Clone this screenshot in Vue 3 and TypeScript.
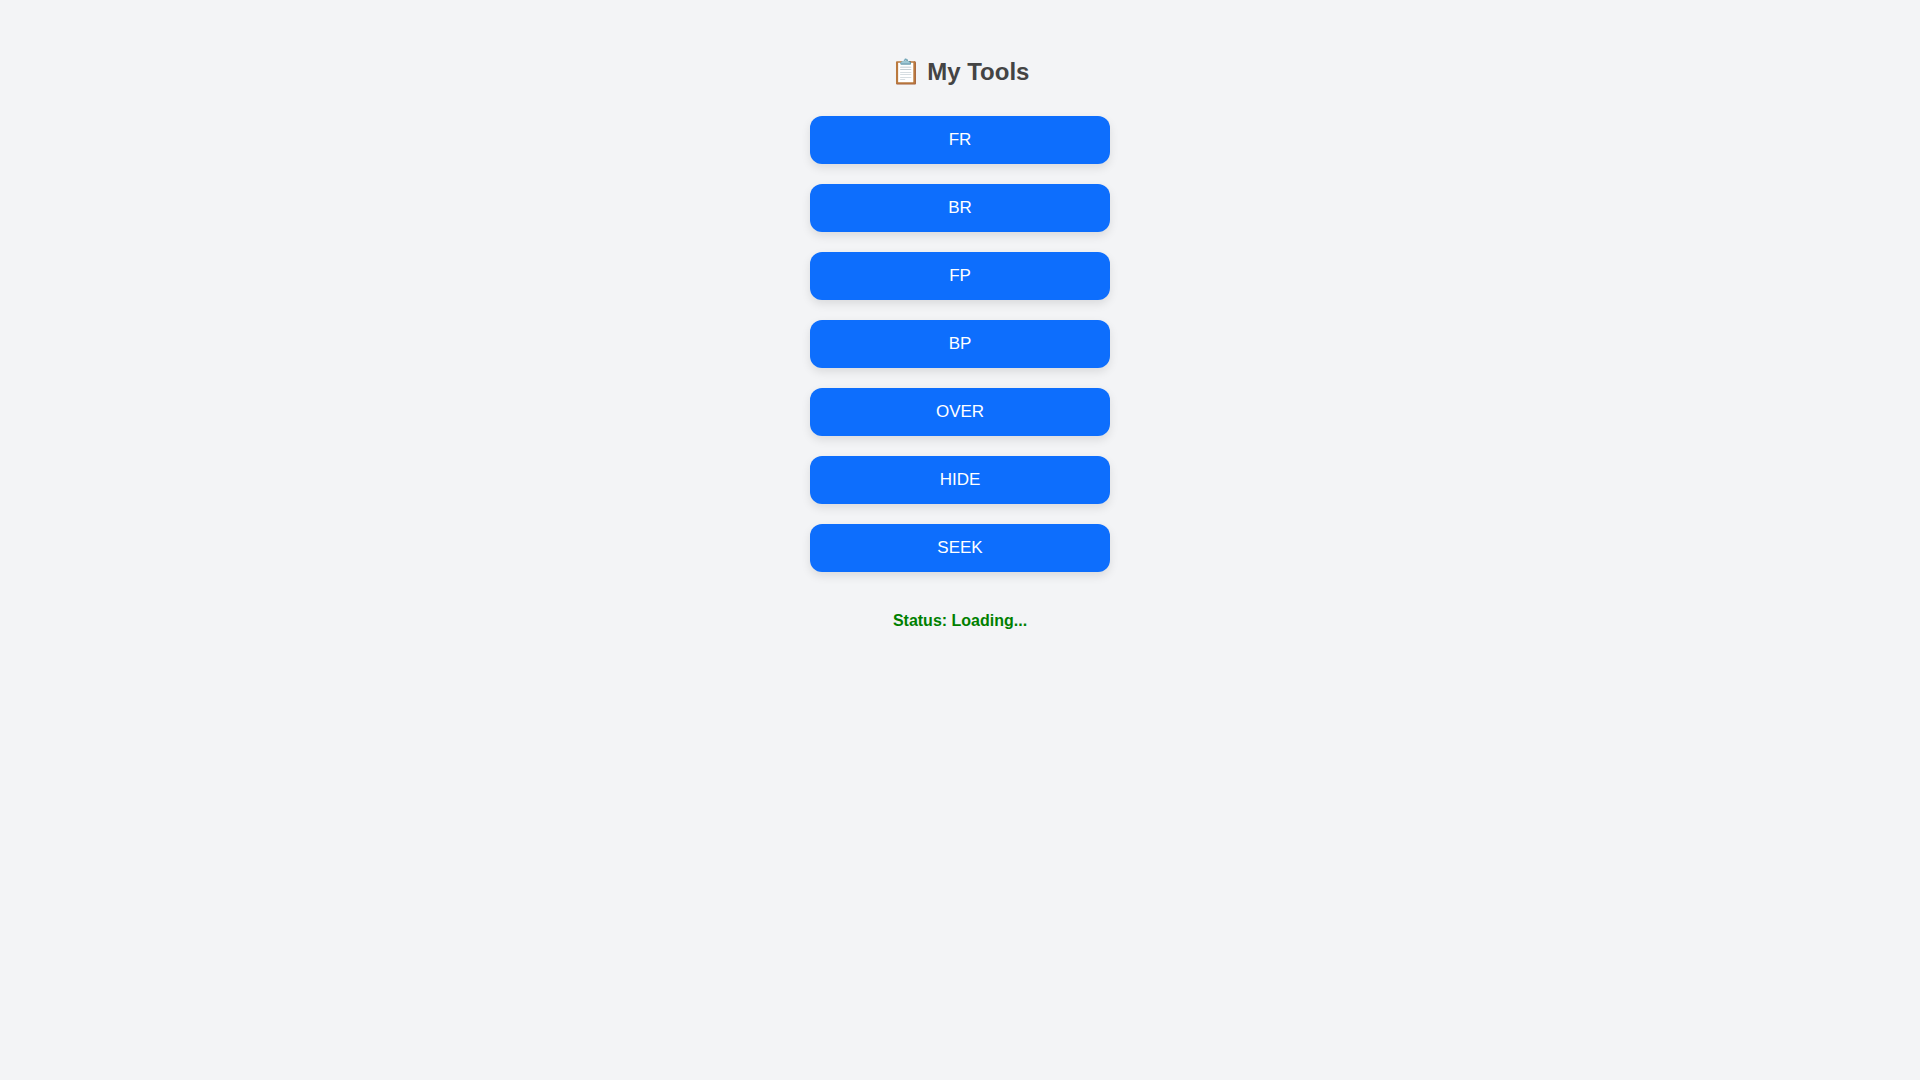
<script setup lang="ts">
const tools: string[] = ['FR', 'BR', 'FP', 'BP', 'OVER', 'HIDE', 'SEEK']
</script>

<template>
  <div class="page">
    <h2 class="title">📋 My Tools</h2>
    <div class="list">
      <button v-for="t in tools" :key="t" class="tool">{{ t }}</button>
    </div>
    <div class="status">Status: Loading...</div>
  </div>
</template>

<style>
html, body { margin: 0; background: #f3f4f6; }
</style>

<style scoped>
.page {
  min-height: 1080px;
  box-sizing: border-box;
  padding-top: 40px;
  display: flex;
  flex-direction: column;
  align-items: center;
  background: #f3f4f6;
  font-family: "Liberation Sans", Arial, sans-serif;
}
.title {
  margin: 18px 0 0;
  font-size: 24px;
  line-height: 28px;
  font-weight: 700;
  color: #444;
}
.list {
  margin-top: 30px;
  display: flex;
  flex-direction: column;
  gap: 20px;
}
.tool {
  width: 300px;
  height: 48px;
  border: none;
  border-radius: 12px;
  background: #0d6efd;
  color: #fff;
  font-family: inherit;
  font-size: 17px;
  box-shadow: 0 4px 10px rgba(0, 0, 0, 0.1);
}
.status {
  margin-top: 40px;
  font-size: 16px;
  line-height: 18px;
  font-weight: 700;
  color: green;
}
</style>
